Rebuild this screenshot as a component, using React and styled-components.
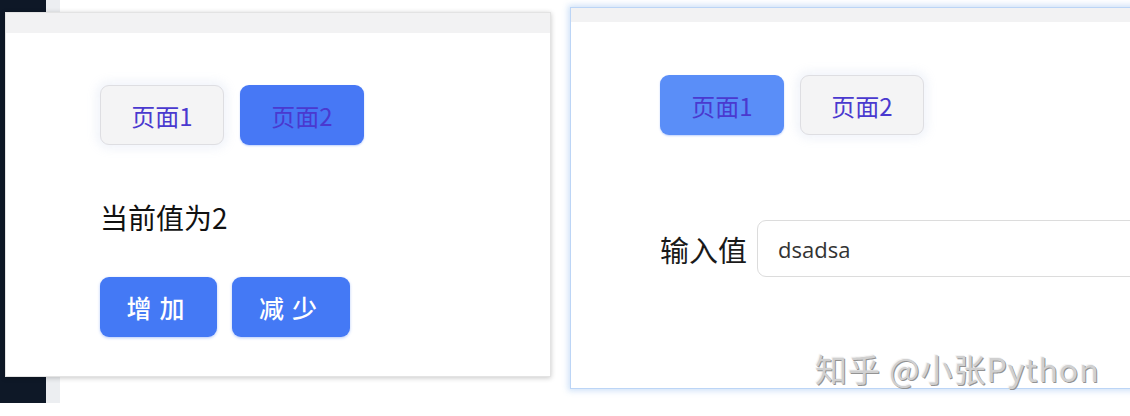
import React from "react"
import styled, { createGlobalStyle } from "styled-components"

const GlobalStyle = createGlobalStyle`
  html, body {
    margin: 0;
    padding: 0;
    background: #ffffff;
  }
  body {
    font-family: "Noto Sans CJK SC", "Noto Sans", sans-serif;
  }
`

const Screen = styled.div`
  position: relative;
  width: 1130px;
  height: 416px;
  overflow: hidden;
  display: flex;
  align-items: flex-start;
  background:
    linear-gradient(to right, #0e1827 0 46px, #eceef1 46px 60px, transparent 60px)
      no-repeat 0 0 / 60px 403px,
    #ffffff;
`

const Card = styled.section`
  flex: none;
  display: flex;
  flex-direction: column;
  background: #ffffff;
  width: ${(p) => p.$width}px;
  height: ${(p) => p.$height}px;
  margin-top: ${(p) => p.$top}px;
  margin-left: ${(p) => p.$left}px;
  border: 1px solid ${(p) => (p.$focused ? "#bcd5f6" : "#e3e3e3")};
  box-shadow: ${(p) =>
    p.$focused
      ? "0 0 6px 2px rgba(150, 190, 240, 0.45)"
      : "0 1px 5px rgba(0, 0, 0, 0.22)"};
`

const TitleBar = styled.div`
  flex: none;
  height: ${(p) => p.$height}px;
  background: #f2f2f3;
`

const Body = styled.div`
  display: flex;
  flex-direction: column;
  align-items: flex-start;
  padding-left: ${(p) => p.$pad}px;
`

const Tabs = styled.div`
  display: flex;
  gap: 16px;
  margin-top: ${(p) => p.$top}px;
`

const Tab = styled.button`
  width: 124px;
  height: 60px;
  box-sizing: border-box;
  border-radius: 9px;
  font-family: "Noto Sans CJK SC", sans-serif;
  font-size: 24px;
  color: #4a39cf;
  cursor: pointer;
  border: 1px solid ${(p) => (p.$active ? "transparent" : "#dedee2")};
  background: ${(p) => (p.$active ? p.$tone : "#f4f4f5")};
  box-shadow: ${(p) =>
    p.$active ? "0 1px 2px rgba(70, 120, 245, 0.35)" : "0 0 10px 4px rgba(240, 243, 250, 0.9)"};
`

const Value = styled.div`
  margin-top: 52px;
  font-size: 28px;
  line-height: 40px;
  color: #111111;
`

const Actions = styled.div`
  display: flex;
  gap: 15px;
  margin-top: 40px;
`

const ActionButton = styled.button`
  width: ${(p) => p.$w}px;
  height: 60px;
  border: none;
  border-radius: 9px;
  background: #4479f5;
  color: #ffffff;
  font-family: "Noto Sans CJK SC", sans-serif;
  font-size: 25px;
  font-weight: 500;
  letter-spacing: 8px;
  padding-left: 8px;
  cursor: pointer;
  box-shadow: 0 1px 3px rgba(68, 121, 245, 0.4);
`

const Field = styled.label`
  display: flex;
  align-items: center;
  gap: 10px;
  margin-top: 85px;
`

const FieldLabel = styled.span`
  flex: none;
  white-space: nowrap;
  font-size: 29px;
  color: #1a1a1a;
`

const Input = styled.input`
  flex: none;
  width: 420px;
  height: 57px;
  box-sizing: border-box;
  border: 1px solid #dcdcdc;
  border-radius: 9px;
  padding: 0 20px;
  font-family: "Open Sans", "Noto Sans", sans-serif;
  font-size: 22px;
  color: #333333;
  outline: none;
`

const Watermark = styled.div`
  position: absolute;
  left: 815px;
  top: 345px;
  font-family: "Noto Sans CJK SC", sans-serif;
  font-size: 32px;
  letter-spacing: 1px;
  color: #d0d0d0;
  text-shadow: 1px 1px 0 #939393, -1px -1px 0 #f4f4f4;
`

export default function App() {
  return (
    <>
      <GlobalStyle />
      <Screen>
        <Card $width={544} $height={363} $top={12} $left={5}>
          <TitleBar $height={20} />
          <Body $pad={94}>
            <Tabs $top={52}>
              <Tab>页面1</Tab>
              <Tab $active $tone="#4778f5">页面2</Tab>
            </Tabs>
            <Value>当前值为2</Value>
            <Actions>
              <ActionButton $w={117}>增加</ActionButton>
              <ActionButton $w={118}>减少</ActionButton>
            </Actions>
          </Body>
        </Card>
        <Card $width={600} $height={380} $top={7} $left={19} $focused>
          <TitleBar $height={14} />
          <Body $pad={89}>
            <Tabs $top={53}>
              <Tab $active $tone="#5a8ef8">页面1</Tab>
              <Tab>页面2</Tab>
            </Tabs>
            <Field>
              <FieldLabel>输入值</FieldLabel>
              <Input defaultValue="dsadsa" />
            </Field>
          </Body>
        </Card>
        <Watermark>知乎 @小张Python</Watermark>
      </Screen>
    </>
  )
}
